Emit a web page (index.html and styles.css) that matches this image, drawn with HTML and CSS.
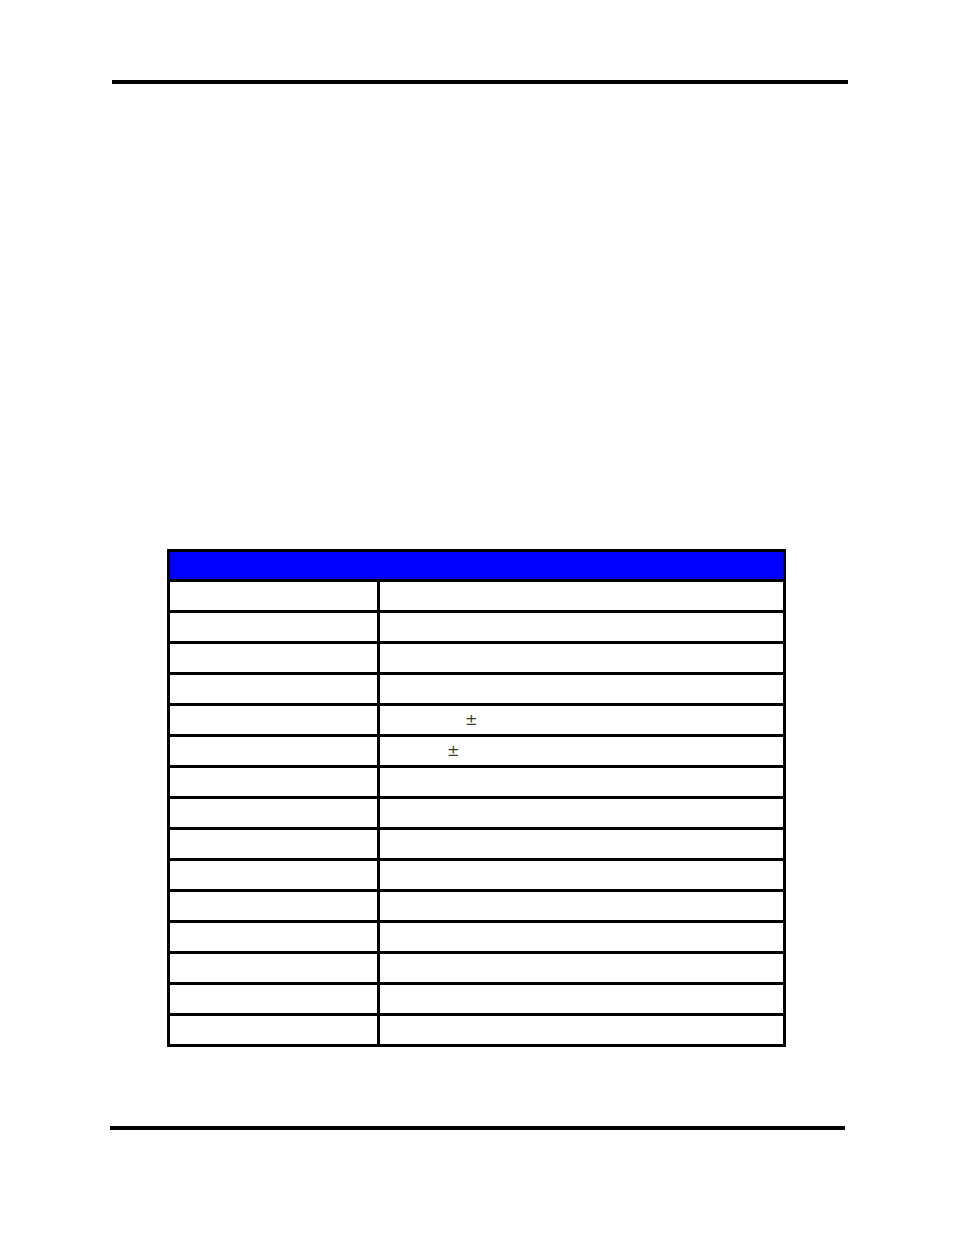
FILE: index.html
```html
<!DOCTYPE html>
<html>
<head>
<meta charset="utf-8">
<link rel="stylesheet" href="styles.css">
</head>
<body>
<div class="page">
  <div class="rule rule-top"></div>
  <div class="spec">
    <div class="head"></div>
    <div class="cell"></div><div class="cell"></div>
    <div class="cell"></div><div class="cell"></div>
    <div class="cell"></div><div class="cell"></div>
    <div class="cell"></div><div class="cell"></div>
    <div class="cell"></div><div class="cell val"><span class="pm pm-a">±</span></div>
    <div class="cell"></div><div class="cell val"><span class="pm pm-b">±</span></div>
    <div class="cell"></div><div class="cell"></div>
    <div class="cell"></div><div class="cell"></div>
    <div class="cell"></div><div class="cell"></div>
    <div class="cell"></div><div class="cell"></div>
    <div class="cell"></div><div class="cell"></div>
    <div class="cell"></div><div class="cell"></div>
    <div class="cell"></div><div class="cell"></div>
    <div class="cell"></div><div class="cell"></div>
    <div class="cell"></div><div class="cell"></div>
  </div>
  <div class="rule rule-bottom"></div>
</div>
</body>
</html>
```

FILE: styles.css
```css
html, body {
  margin: 0;
  padding: 0;
  background: #ffffff;
}
body {
  font-family: "Liberation Sans", Arial, sans-serif;
  width: 954px;
  height: 1235px;
  overflow: hidden;
}
.page {
  display: flex;
  flex-direction: column;
  padding-top: 80px;
}
.rule {
  height: 4px;
  background: #000000;
}
.rule-top {
  margin-left: 112px;
  width: 736px;
}
.rule-bottom {
  margin-left: 110px;
  width: 735px;
  margin-top: 79px;
}
.spec {
  margin-top: 465px;
  margin-left: 167px;
  width: 619px;
  box-sizing: border-box;
  display: grid;
  grid-template-columns: 207px 1fr;
  gap: 3px;
  padding: 3px;
  background: #000000;
}
.head {
  grid-column: 1 / 3;
  height: 27px;
  background: #0000ff;
}
.cell {
  height: 28px;
  background: #ffffff;
  display: flex;
  align-items: center;
}
.pm {
  font-family: "DejaVu Sans", sans-serif;
  font-size: 15px;
  color: #3a3a3a;
  line-height: 1;
}
.pm-a {
  padding-left: 85px;
}
.pm-b {
  padding-left: 67px;
}
```
